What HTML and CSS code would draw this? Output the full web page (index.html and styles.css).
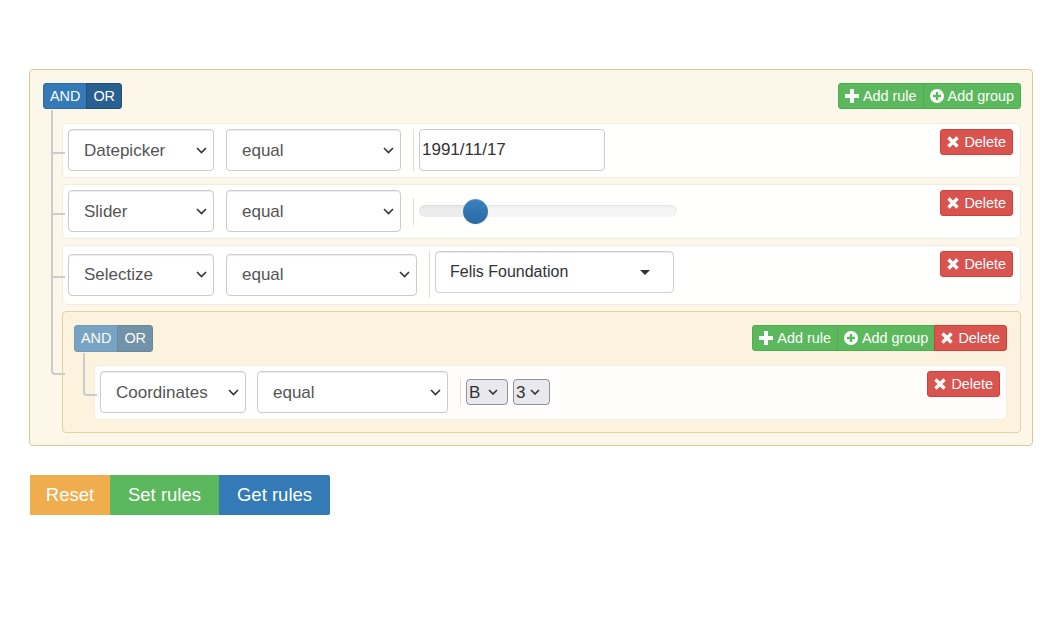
FILE: index.html
```html
<!DOCTYPE html>
<html>
<head>
<meta charset="utf-8">
<link rel="stylesheet" href="styles.css">
</head>
<body>
<div class="page">
  <div class="group group-root">
    <div class="group-header">
      <div class="btn-group cond">
        <span class="btn btn-primary">AND</span>
        <span class="btn btn-primary active">OR</span>
      </div>
      <div class="btn-group">
        <span class="btn btn-success"><svg class="ico" viewBox="0 0 14 14"><path d="M5 0h4v5h5v4H9v5H5V9H0V5h5z" fill="#fff"/></svg>Add rule</span>
        <span class="btn btn-success"><svg class="ico" viewBox="0 0 14 14"><circle cx="7" cy="7" r="7" fill="#fff"/><path d="M5.8 3h2.4v2.8H11v2.4H8.2V11H5.8V8.2H3V5.8h2.8z" fill="#5cb85c"/></svg>Add group</span>
      </div>
    </div>
    <div class="rules-list">
      <div class="item rule">
        <select class="form-control filter"><option>Datepicker</option></select>
        <select class="form-control op"><option>equal</option></select>
        <div class="value"><input class="date" type="text" value="1991/11/17"></div>
        <span class="btn btn-danger del"><svg class="ico x" viewBox="0 0 12 12"><path d="M1.5 1.5l9 9M10.5 1.5l-9 9" stroke="#fff" stroke-width="3.4"/></svg>Delete</span>
      </div>
      <div class="item rule">
        <select class="form-control filter"><option>Slider</option></select>
        <select class="form-control op"><option>equal</option></select>
        <div class="value">
          <div class="slider"><div class="track"><div class="thumb"></div></div></div>
        </div>
        <span class="btn btn-danger del"><svg class="ico x" viewBox="0 0 12 12"><path d="M1.5 1.5l9 9M10.5 1.5l-9 9" stroke="#fff" stroke-width="3.4"/></svg>Delete</span>
      </div>
      <div class="item rule">
        <select class="form-control filter"><option>Selectize</option></select>
        <select class="form-control op wide"><option>equal</option></select>
        <div class="value value-tall">
          <div class="selectize"><span>Felis Foundation</span><span class="caret"></span></div>
        </div>
        <span class="btn btn-danger del"><svg class="ico x" viewBox="0 0 12 12"><path d="M1.5 1.5l9 9M10.5 1.5l-9 9" stroke="#fff" stroke-width="3.4"/></svg>Delete</span>
      </div>
      <div class="item group group-inner">
        <div class="group-header">
          <div class="btn-group cond disabled">
            <span class="btn btn-primary">AND</span>
            <span class="btn btn-primary active">OR</span>
          </div>
          <div class="btn-group">
            <span class="btn btn-success"><svg class="ico" viewBox="0 0 14 14"><path d="M5 0h4v5h5v4H9v5H5V9H0V5h5z" fill="#fff"/></svg>Add rule</span>
            <span class="btn btn-success"><svg class="ico" viewBox="0 0 14 14"><circle cx="7" cy="7" r="7" fill="#fff"/><path d="M5.8 3h2.4v2.8H11v2.4H8.2V11H5.8V8.2H3V5.8h2.8z" fill="#5cb85c"/></svg>Add group</span>
            <span class="btn btn-danger"><svg class="ico x" viewBox="0 0 12 12"><path d="M1.5 1.5l9 9M10.5 1.5l-9 9" stroke="#fff" stroke-width="3.4"/></svg>Delete</span>
          </div>
        </div>
        <div class="rules-list inner-list">
          <div class="item rule">
            <select class="form-control filter"><option>Coordinates</option></select>
            <select class="form-control op wide narrow-gap"><option>equal</option></select>
            <div class="value">
              <select class="mini"><option>B</option></select>
              <select class="mini"><option>3</option></select>
            </div>
            <span class="btn btn-danger del"><svg class="ico x" viewBox="0 0 12 12"><path d="M1.5 1.5l9 9M10.5 1.5l-9 9" stroke="#fff" stroke-width="3.4"/></svg>Delete</span>
          </div>
        </div>
      </div>
    </div>
  </div>

  <div class="actions">
    <span class="big btn-warning">Reset</span>
    <span class="big btn-success">Set rules</span>
    <span class="big btn-primary">Get rules</span>
  </div>
</div>
</body>
</html>
```

FILE: styles.css
```css
* { box-sizing: border-box; }
html, body { margin: 0; padding: 0; background: #fff; }
body {
  font-family: "Liberation Sans", Arial, sans-serif;
  font-size: 17px;
  color: #333;
}
.page {
  padding: 69px 17px 0 29px;
}

/* groups */
.group {
  border: 1px solid #dcc896;
  background: rgba(250, 240, 210, 0.5);
  border-radius: 4px;
}
.group-root {
  padding: 13px 11px 12px 13px;
}
.group-inner {
  padding: 13px 13px 12px 11px;
  border-color: #e3d3a4;
}
.group-header {
  display: flex;
  justify-content: space-between;
  align-items: flex-start;
}

/* buttons */
.btn-group { display: flex; }
.btn {
  display: inline-flex;
  align-items: center;
  height: 26px;
  padding: 0 6px;
  font-size: 14.4px;
  line-height: 1;
  color: #fff;
  border: 1px solid transparent;
  white-space: nowrap;
}
.btn-group .btn:first-child { border-radius: 3px 0 0 3px; }
.btn-group .btn:last-child { border-radius: 0 3px 3px 0; }
.btn-group .btn + .btn { margin-left: -1px; }
.btn-primary { background: #337ab7; border-color: #2e6da4; }
.btn-primary.active { background: #286090; border-color: #204d74; }
.btn-success { background: #5cb85c; border-color: #4cae4c; }
.btn-danger { background: #d9534f; border-color: #d43f3a; }
.btn-warning { background: #f0ad4e; }
.cond .btn { padding: 0 6px; }
.cond.disabled { opacity: 0.65; }
.group-inner .cond .btn { height: 27px; }
.ico {
  width: 14px;
  height: 14px;
  margin-right: 4px;
  flex-shrink: 0;
}
.ico.x { width: 12px; height: 12px; margin-right: 5px; }
.del {
  margin-left: auto;
  align-self: flex-start;
  border-radius: 3px;
}

/* tree */
.rules-list {
  --gap: 14px;
  display: flex;
  flex-direction: column;
  gap: 6px;
  margin: 14px 0 0 19px;
}
.inner-list {
  --gap: 13px;
  margin: 13px 0 0 20px;
}
.rules-list > .item { position: relative; }
.rules-list > .item::before {
  content: "";
  position: absolute;
  left: -12px;
  top: calc(var(--gap) * -1);
  width: 12px;
  height: calc(50% + var(--gap) + 1px);
  border-left: 2px solid #ccc;
  border-bottom: 2px solid #ccc;
}
.rules-list > .item::after {
  content: "";
  position: absolute;
  left: -12px;
  top: 50%;
  height: calc(50% + 6px);
  border-left: 2px solid #ccc;
}
.rules-list > .item:last-child::after { display: none; }
.rules-list > .item:last-child::before { border-bottom-left-radius: 4px; }

/* rules */
.rule {
  display: flex;
  align-items: center;
  padding: 5px 7px 6px 5px;
  background: rgba(255, 255, 255, 0.9);
  border: 1px solid #f1ede2;
  border-radius: 5px;
}
.group-inner .rule { padding-right: 6px; }
.form-control {
  -webkit-appearance: none;
  appearance: none;
  height: 42px;
  padding: 0 24px 0 15px;
  font-family: "Liberation Sans", Arial, sans-serif;
  font-size: 17px;
  color: #555;
  background-color: #fff;
  background-image: url("data:image/svg+xml,%3Csvg xmlns='http://www.w3.org/2000/svg' width='11' height='7' viewBox='0 0 11 7'%3E%3Cpath d='M1 1l4.5 4.5L10 1' fill='none' stroke='%23333' stroke-width='1.6'/%3E%3C/svg%3E");
  background-repeat: no-repeat;
  background-position: right 6px center;
  background-size: 11px 7px;
  border: 1px solid #ccc;
  border-radius: 4px;
  box-shadow: inset 0 1px 1px rgba(0, 0, 0, 0.075);
}
.filter { width: 146px; }
.op { width: 175px; margin-left: 12px; }
.op.wide { width: 191px; }
.op.narrow-gap { margin-left: 11px; }
.value {
  display: flex;
  align-items: center;
  gap: 5px;
  margin-left: 12px;
  padding-left: 5px;
  border-left: 1px solid #ddd;
}
.value-tall {
  align-items: flex-start;
  height: 47px;
  padding-left: 5px;
}
.date {
  width: 186px;
  height: 42px;
  padding: 0 2px;
  font-family: "Liberation Sans", Arial, sans-serif;
  font-size: 17px;
  color: #333;
  border: 1px solid #ccc;
  border-radius: 4px;
  background: #fff;
  outline: none;
}

/* slider */
.slider {
  display: flex;
  align-items: center;
  height: 27px;
}
.track {
  display: flex;
  align-items: center;
  width: 258px;
  height: 12px;
  padding-left: 44px;
  border-radius: 6px;
  background: linear-gradient(to right, #ececec 0, #ececec 57px, #f5f5f5 57px, #f5f5f5 100%);
  box-shadow: inset 0 1px 2px rgba(0, 0, 0, 0.08);
}
.thumb {
  width: 25px;
  height: 25px;
  flex-shrink: 0;
  border-radius: 50%;
  background: linear-gradient(to bottom, #3a80bd 0%, #2a6aa3 100%);
  box-shadow: inset 0 1px 0 rgba(255, 255, 255, 0.2), 0 1px 2px rgba(0, 0, 0, 0.05);
}

/* selectize */
.selectize {
  display: flex;
  align-items: center;
  justify-content: space-between;
  width: 239px;
  height: 42px;
  padding: 0 23px 0 14px;
  font-size: 16px;
  color: #333;
  background: #fff;
  border: 1px solid #d0d0d0;
  border-radius: 4px;
  box-shadow: inset 0 1px 1px rgba(0, 0, 0, 0.1);
}
.caret {
  width: 0;
  height: 0;
  border-left: 5px solid transparent;
  border-right: 5px solid transparent;
  border-top: 5px solid #333;
}

/* mini selects */
.mini {
  -webkit-appearance: none;
  appearance: none;
  height: 26px;
  padding: 0 0 0 2px;
  font-family: "Liberation Sans", Arial, sans-serif;
  font-size: 17px;
  color: #333;
  background-color: #e9e9ed;
  background-image: url("data:image/svg+xml,%3Csvg xmlns='http://www.w3.org/2000/svg' width='10' height='6' viewBox='0 0 10 6'%3E%3Cpath d='M1 1l4 4 4-4' fill='none' stroke='%23333' stroke-width='1.6'/%3E%3C/svg%3E");
  background-repeat: no-repeat;
  background-position: right 9px center;
  background-size: 10px 6px;
  border: 1px solid #8f8f9d;
  border-radius: 4px;
}
.mini:first-child { width: 42px; }
.mini:last-child { width: 37px; }

/* actions */
.actions {
  display: flex;
  margin: 29px 0 0 1px;
}
.big {
  display: inline-flex;
  align-items: center;
  justify-content: center;
  height: 40px;
  font-size: 18.5px;
  color: #fff;
}
.big.btn-warning { width: 80px; }
.big.btn-success { width: 109px; }
.big.btn-primary { width: 111px; border-radius: 0 2px 2px 0; }
```
